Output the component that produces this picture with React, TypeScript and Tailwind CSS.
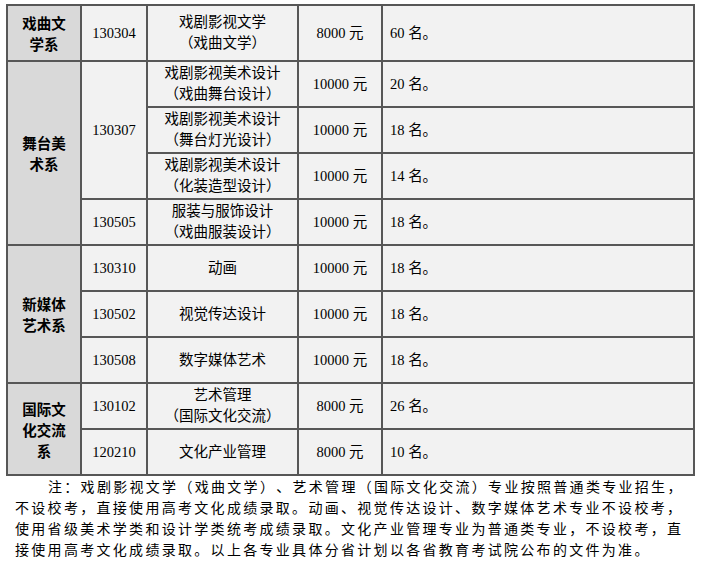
import React from 'react';

// Admissions plan table: department / code / major / tuition / quota
type Row = {
  dept?: { lines: string[]; span: number };
  code?: { text: string; span: number };
  major: string[];
  fee: string;
  quota: string;
};

const rows: Row[] = [
  {
    dept: { lines: ['戏曲文', '学系'], span: 1 },
    code: { text: '130304', span: 1 },
    major: ['戏剧影视文学', '（戏曲文学）'],
    fee: '8000 元',
    quota: '60 名。',
  },
  {
    dept: { lines: ['舞台美', '术系'], span: 4 },
    code: { text: '130307', span: 3 },
    major: ['戏剧影视美术设计', '（戏曲舞台设计）'],
    fee: '10000 元',
    quota: '20 名。',
  },
  { major: ['戏剧影视美术设计', '（舞台灯光设计）'], fee: '10000 元', quota: '18 名。' },
  { major: ['戏剧影视美术设计', '（化装造型设计）'], fee: '10000 元', quota: '14 名。' },
  {
    code: { text: '130505', span: 1 },
    major: ['服装与服饰设计', '（戏曲服装设计）'],
    fee: '10000 元',
    quota: '18 名。',
  },
  {
    dept: { lines: ['新媒体', '艺术系'], span: 3 },
    code: { text: '130310', span: 1 },
    major: ['动画'],
    fee: '10000 元',
    quota: '18 名。',
  },
  { code: { text: '130502', span: 1 }, major: ['视觉传达设计'], fee: '10000 元', quota: '18 名。' },
  { code: { text: '130508', span: 1 }, major: ['数字媒体艺术'], fee: '10000 元', quota: '18 名。' },
  {
    dept: { lines: ['国际文', '化交流', '系'], span: 2 },
    code: { text: '130102', span: 1 },
    major: ['艺术管理', '（国际文化交流）'],
    fee: '8000 元',
    quota: '26 名。',
  },
  { code: { text: '120210', span: 1 }, major: ['文化产业管理'], fee: '8000 元', quota: '10 名。' },
];

const spanClass: Record<number, string> = {
  1: 'row-span-1',
  2: 'row-span-2',
  3: 'row-span-3',
  4: 'row-span-4',
};

const notes = [
  '注：戏剧影视文学（戏曲文学）、艺术管理（国际文化交流）专业按照普通类专业招生，',
  '不设校考，直接使用高考文化成绩录取。动画、视觉传达设计、数字媒体艺术专业不设校考，',
  '使用省级美术学类和设计学类统考成绩录取。文化产业管理专业为普通类专业，不设校考，直',
  '接使用高考文化成绩录取。以上各专业具体分省计划以各省教育考试院公布的文件为准。',
];

const cell = 'bg-[#f2f2f2] flex items-center justify-center text-center';

export default function App() {
  return (
    <div
      className="bg-white w-[701px] h-[569px] overflow-hidden text-black [text-spacing-trim:space-all]"
      style={{ fontFamily: '"Liberation Serif", "Noto Sans CJK SC", serif' }}
    >
      <div className="pt-[4px] pl-[6px]">
        <div className="grid w-[689px] grid-cols-[72px_64px_149px_82px_310px] grid-rows-[54px_repeat(9,44px)] gap-[2px] p-[2px] bg-[#575757] text-[14.5px] leading-[21px]">
          {rows.map((r, i) => (
            <React.Fragment key={i}>
              {r.dept && (
                <div
                  className={`${spanClass[r.dept.span]} bg-[#d9d9d9] flex flex-col items-center justify-center font-bold`}
                  style={{ fontFamily: '"Noto Sans CJK SC", sans-serif' }}
                >
                  {r.dept.lines.map((l) => (
                    <span key={l}>{l}</span>
                  ))}
                </div>
              )}
              {r.code && <div className={`${spanClass[r.code.span]} ${cell}`}>{r.code.text}</div>}
              <div className={`${cell} flex-col`}>
                {r.major.map((m) => (
                  <span key={m}>{m}</span>
                ))}
              </div>
              <div className={cell}>{r.fee}</div>
              <div className="bg-[#f2f2f2] flex items-center pl-[7px]">{r.quota}</div>
            </React.Fragment>
          ))}
        </div>
      </div>

      <div className="pl-[15px] pt-[1px] text-[14px] leading-[21px] tracking-[2.3px] whitespace-nowrap">
        {notes.map((n, i) => (
          <div key={i} className={i === 0 ? 'pl-[33px]' : ''}>
            {n}
          </div>
        ))}
      </div>
    </div>
  );
}
